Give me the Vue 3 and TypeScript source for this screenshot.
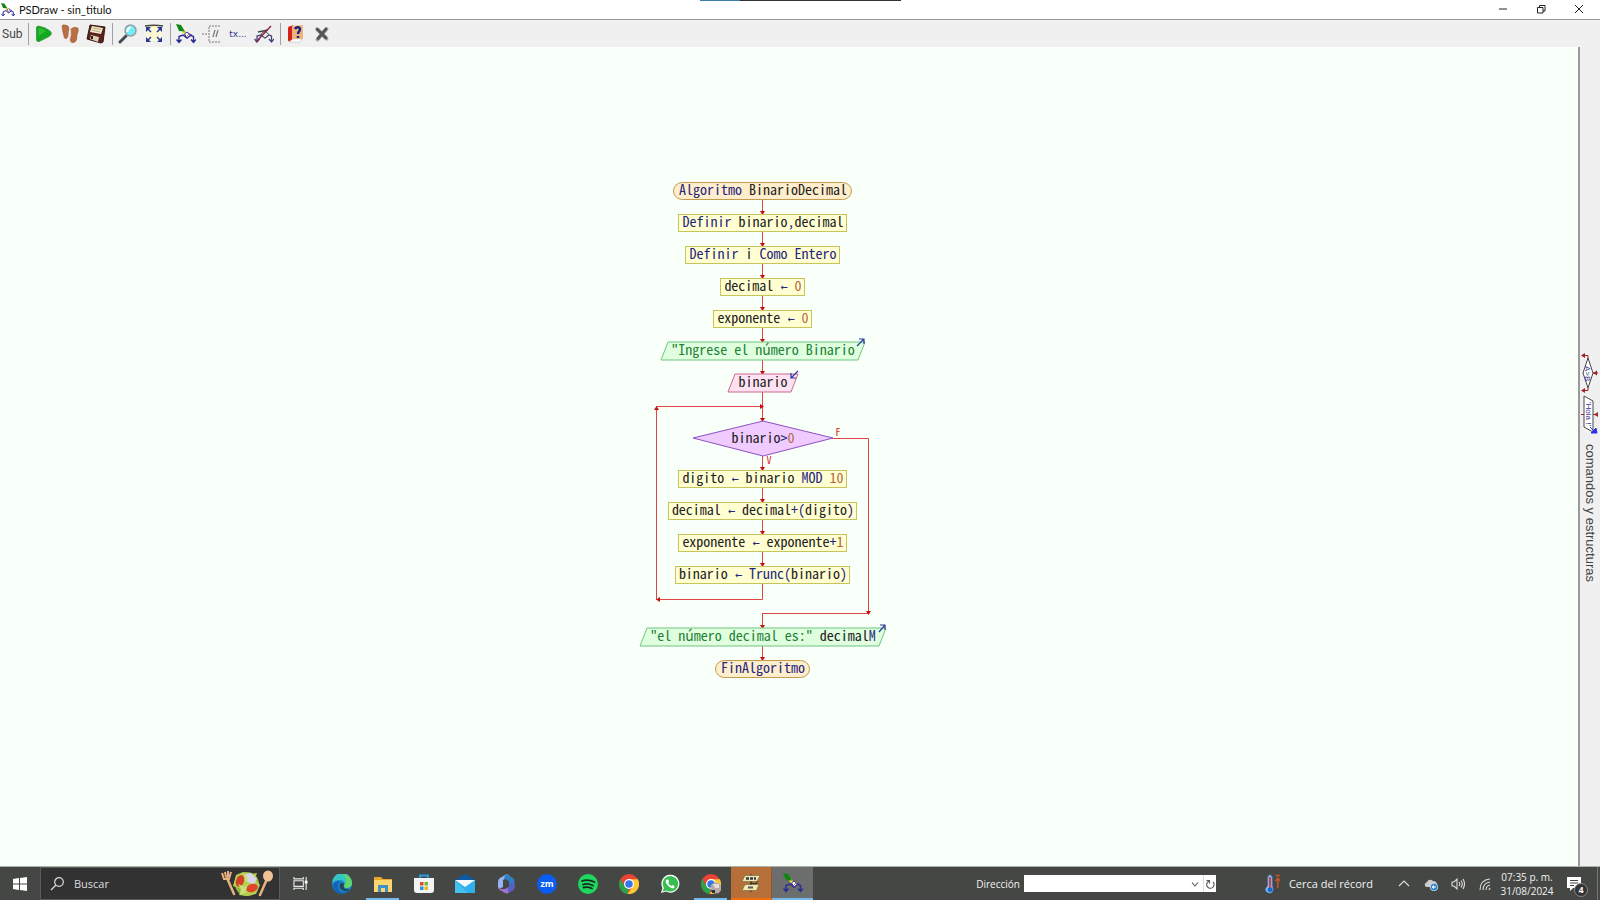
<script setup lang="ts">
type Tone = 'key' | 'name' | 'num' | 'str' | 'arrow'
type Shape = 'pill' | 'box' | 'out' | 'in' | 'diamond'
interface Part { t: string; c: Tone }
interface FlowNode { shape: Shape; y: number; half: number; parts: Part[] }

const CX = 763

const p = (t: string, c: Tone = 'name'): Part => ({ t, c })
const arrow = p('←', 'arrow')

const nodes: FlowNode[] = [
  { shape: 'pill', y: 182, half: 89, parts: [p('Algoritmo ', 'key'), p('BinarioDecimal')] },
  { shape: 'box', y: 214, half: 84, parts: [p('Definir ', 'key'), p('binario'), p(',', 'key'), p('decimal')] },
  { shape: 'box', y: 246, half: 77, parts: [p('Definir ', 'key'), p('i '), p('Como Entero', 'key')] },
  { shape: 'box', y: 278, half: 42, parts: [p('decimal '), arrow, p(' 0', 'num')] },
  { shape: 'box', y: 310, half: 49, parts: [p('exponente '), arrow, p(' 0', 'num')] },
  { shape: 'out', y: 342, half: 98, parts: [p('"Ingrese el número Binario', 'str')] },
  { shape: 'in', y: 374, half: 31, parts: [p('binario')] },
  { shape: 'diamond', y: 430, half: 70, parts: [p('binario'), p('>', 'key'), p('0', 'num')] },
  { shape: 'box', y: 470, half: 84, parts: [p('digito '), arrow, p(' binario '), p('MOD ', 'key'), p('10', 'num')] },
  { shape: 'box', y: 502, half: 94, parts: [p('decimal '), arrow, p(' decimal'), p('+(', 'key'), p('digito'), p(')', 'key')] },
  { shape: 'box', y: 534, half: 84, parts: [p('exponente '), arrow, p(' exponente'), p('+', 'key'), p('1', 'num')] },
  { shape: 'box', y: 566, half: 87, parts: [p('binario '), arrow, p(' Trunc(', 'key'), p('binario'), p(')', 'key')] },
  { shape: 'out', y: 628, half: 119, parts: [p('"el número decimal es:"', 'str'), p(' decimal'), p('M', 'key')] },
  { shape: 'pill', y: 660, half: 47, parts: [p('FinAlgoritmo', 'key')] },
]

// Vertical connectors that end in an arrow head: start and end.
const drops: [number, number][] = [
  [200, 214], [232, 246], [264, 278], [296, 310], [328, 342], [360, 374], [392, 421],
  [456, 470], [488, 502], [520, 534], [552, 566], [613, 628], [646, 660],
]

function outline(n: FlowNode): string {
  const l = CX - n.half
  const r = CX + n.half
  const t = n.y
  const b = n.y + 18
  if (n.shape === 'diamond') return `${l},438 ${CX},421 ${r},438 ${CX},456`
  if (n.shape === 'out' || n.shape === 'in') return `${l + 3},${t} ${r + 4},${t} ${r - 3},${b} ${l - 4},${b}`
  return ''
}
</script>

<template>
  <div class="window">
    <!-- icons used more than once -->
    <svg class="defs" aria-hidden="true">
      <symbol id="flow" viewBox="0 0 20 20">
        <path d="M9 9 15 11 11 14 7 11 3 12.500 3 18M14 11 17.500 12.500 17.500 18M.5 15.500 3 18.500 5.500 15.500M15 15.500 17.500 18.500 20 15.500" fill="none" stroke="#292c94" stroke-width="1.400" />
        <path d="M7 7 11 11" stroke="#e8df3c" stroke-width="3" />
        <path d="M8.500 10 11 8 14.500 11 11 14Z" fill="#fff" stroke="#292c94" />
        <path d="M0 0 5 1 9 7.500 3 7Z" fill="#118512" />
        <path d="M10 13 14 9" stroke="#d06058" />
      </symbol>
      <symbol id="chrome" viewBox="0 0 20 20">
        <circle cx="10" cy="10" r="10" fill="#e94436" />
        <path d="M1.4 5 6 13 10 14.5 8.5 20A10 10 0 0 1 1.4 5Z" fill="#2ba24c" />
        <path d="M10 5.3H18.8A10 10 0 0 1 8.5 19.9L14 12Z" fill="#fcc934" />
        <circle cx="10" cy="10" r="5" fill="#fff" />
        <circle cx="10" cy="10" r="3.8" fill="#3577e8" />
      </symbol>
    </svg>

    <header class="titlebar">
      <svg class="app-icon" viewBox="0 0 20 20"><use href="#flow" /></svg>
      <h1>PSDraw - sin_titulo</h1>
      <span class="snap"></span>
      <div class="caption">
        <button aria-label="Minimizar"><svg viewBox="0 0 10 10"><path d="M1 5H9" /></svg></button>
        <button aria-label="Restaurar"><svg viewBox="0 0 10 10"><path d="M1.5 3.5H7V9H1.500ZM3.500 3.500V1.500H9V7H7" /></svg></button>
        <button aria-label="Cerrar"><svg viewBox="0 0 10 10"><path d="M1 1 9 9M9 1 1 9" /></svg></button>
      </div>
    </header>

    <nav class="toolbar">
      <button class="sub">Sub</button>
      <i class="sep"></i>
      <button aria-label="Ejecutar">
        <svg viewBox="0 0 20 20"><path d="M4 2Q2 2 2.500 6V14Q2 18 5 17.500L15 12.500Q19 10 16 7Q11 3 4 2Z" fill="#13a81e" stroke="#3e9d45" /><path d="M4 4Q8 4 12 7L5 12Z" fill="#2fbd35" /></svg>
      </button>
      <button aria-label="Paso a paso">
        <svg viewBox="0 0 20 20"><path d="M2 3Q2 0 5 1Q9 1 9 5Q8 8 8 12Q7 16 4.500 14Q3 10 2 3ZM11 5Q14 2 18 4Q19 7 17 11Q17 17 15 18Q11 20 10 16Q12 12 11 5Z" fill="#b96f43" stroke="#a45f38" stroke-width=".6" /></svg>
      </button>
      <button aria-label="Guardar">
        <svg viewBox="0 0 20 20"><path d="M4 1 19 3 17 18 15 19 1 15Z" fill="#5c201b" stroke="#351814" /><path d="M6 2 17 4 15 10 4 8Z" fill="#efe7c5" /><path d="M7 4 15 5.500M6 6 14 8" stroke="#a19879" stroke-width=".8" /><path d="M5 11 13 13 12 18 4 15Z" fill="#d9d0ba" /><path d="M6 12V15" stroke="#351814" stroke-width="2" /></svg>
      </button>
      <i class="sep"></i>
      <button aria-label="Zoom">
        <svg viewBox="0 0 20 20"><path d="M2 18 8 12" stroke="#414a55" stroke-width="3" stroke-linecap="round" /><circle cx="12.500" cy="6.500" r="5.500" fill="#70eff8" stroke="#97a0a4" stroke-width="1.500" /><path d="M9.500 8Q9 4 13 3.500" fill="none" stroke="#fff" stroke-width="2" /></svg>
      </button>
      <button aria-label="Ajustar">
        <svg viewBox="0 0 20 20"><path d="M2 2H18L17 17H3Z" fill="#fdfad3" /><path d="M1 2Q10 .5 19 2" fill="none" stroke="#474a3b" stroke-width="1.500" /><path d="M3 4 7 8M17 4 13 8M3 17 7 13M17 17 13 13" stroke="#26379c" stroke-width="1.500" /><path d="M2 3H7L2 8ZM18 3H13L18 8ZM2 18V13L7 18ZM18 18V13L13 18Z" fill="#26379c" /></svg>
      </button>
      <i class="sep"></i>
      <button aria-label="Diagrama"><svg viewBox="0 0 20 20"><use href="#flow" /></svg></button>
      <button aria-label="Comentarios">
        <svg viewBox="0 0 20 20"><path d="M0 10H6M18 2H7V18H18" fill="none" stroke="#777" stroke-dasharray="2 1" /><path d="M11 13 13 6M14 13 16 6" stroke="#777" stroke-width="1.200" /></svg>
      </button>
      <button class="tx">tx...</button>
      <button aria-label="Sin diagrama">
        <svg viewBox="0 0 20 20"><path d="M3 17V12L7 11 11 14 15 11 17.500 12V17M.5 15 3 18 5.500 15M15 15 17.500 18 20 15" fill="none" stroke="#3f4580" stroke-width="1.300" /><path d="M8 9 11 7 15 10.500 11 14 7 11Z" fill="#e8e8ea" stroke="#4c4f57" /><path d="M4 8 14 6" stroke="#444" stroke-width="1.500" /><path d="M2 18 17 2" stroke="#8a2745" stroke-width="1.500" /></svg>
      </button>
      <i class="sep"></i>
      <button aria-label="Ayuda">
        <svg viewBox="0 0 20 20"><path d="M3 3 7 1V15L3 18Z" fill="#d5201b" /><path d="M3 18 7 15H16L14 18Z" fill="#fff" stroke="#bbb" stroke-width=".5" /><path d="M5 2 17 1V15H6Z" fill="#eeb37d" /><path d="M2 4Q2 2 6 2V15Q3 15 2 18Z" fill="#d5201b" /><path d="M9 5Q10 3 12 3.200Q15 4 13.500 7Q12 8 12 10M12 12V14" fill="none" stroke="#171f80" stroke-width="2.400" /></svg>
      </button>
      <button aria-label="Cerrar diagrama">
        <svg viewBox="0 0 20 20"><path d="M5.500 5.500 14.500 14.500M14.500 5 5.500 15.500" stroke="#aaa" stroke-width="4" stroke-linecap="round" /><path d="M5 5 14 14M14 5 6 14.500" stroke="#555" stroke-width="2.800" stroke-linecap="round" /></svg>
      </button>
    </nav>

    <main class="work">
      <section class="canvas">
        <svg class="diagram" viewBox="630 170 270 520" role="img" aria-label="BinarioDecimal">
          <g class="wire">
            <path v-for="[a, b] in drops" :key="a" :d="`M${CX - 0.5} ${a}V${b}`" />
            <path d="M762.500 584V599.500H656.500V406.500H762.500" />
            <path d="M832 438.500H868.500V613.500H762.500" />
          </g>
          <g class="head">
            <path v-for="[a, b] in drops" :key="a" :d="`M${CX - 3} ${b - 3}h5l-2.500 4z`" />
            <path d="M760 404v5l4 -2.500zM660 597v5l-4 -2.500zM654 410h5l-2.500 -4zM866 611h5l-2.500 4z" />
          </g>
          <g v-for="n in nodes" :key="n.y" :class="['node', n.shape]">
            <rect v-if="n.shape === 'box' || n.shape === 'pill'" :x="CX - n.half - 0.5" :y="n.y + 0.5" :width="n.half * 2" height="17" :rx="n.shape === 'pill' ? 9 : 0" />
            <polygon v-else :points="outline(n)" />
            <text :x="CX" :y="n.y + 13"><tspan v-for="(q, i) in n.parts" :key="i" :class="q.c">{{ q.t }}</tspan></text>
          </g>
          <g class="io">
            <path d="M857 346 864 339M859 339H864V344" />
            <path d="M879 632 885 625M880 625H885V630" />
            <path d="M798 371 791 378M791 373V378H796" />
          </g>
          <text class="branch" x="838" y="436">F</text>
          <text class="branch" x="769" y="464">V</text>
        </svg>
      </section>

      <aside class="palette">
        <svg class="pieces" viewBox="0 0 20 80">
          <path d="M8 4 13 19 8 34 3 19ZM4 42 13 47V78L4 73Z" fill="#fff" stroke="#333" stroke-width=".9" />
          <path d="M8 4V1.500H2M8 34V36.500H2M13 19H18M13 60.500H18M4 60.500H1" fill="none" stroke="#a12227" />
          <path d="M1 1.500 5 -1V4ZM1 36.500 5 34V39ZM13 19 17 16.500V21.500ZM14 60.500 18 58V63Z" fill="#a12227" />
          <path d="M10 73 16 79M17 79 11 79 16 74Z" fill="#2931e8" stroke="#2931e8" />
          <text x="12" y="-5" transform="rotate(90)">A&gt;B</text>
          <text x="48" y="-6" transform="rotate(90)">'Hola !'</text>
        </svg>
        <span class="palette-name">comandos y estructuras</span>
      </aside>
    </main>

    <footer class="taskbar">
      <button class="start" aria-label="Inicio">
        <svg viewBox="0 0 14 14"><path d="M0 2 6 1V6.500H0ZM7 1 14 0V6.500H7ZM0 7.500H6V13L0 12ZM7 7.500H14V14L7 13Z" fill="#fff" /></svg>
      </button>
      <label class="search">
        <svg class="lens" viewBox="0 0 14 14"><circle cx="9" cy="5" r="4.300" /><path d="M6 8 1 13" /></svg>
        <input type="text" placeholder="Buscar" aria-label="Buscar">
        <svg class="salad" viewBox="0 0 52 28">
          <circle cx="26" cy="14" r="12" fill="#91b53f" />
          <path d="M15 5 22 2 29 4 36 3 34 9 39 15 35 24 26 26 18 25 20 19 12 16Z" fill="#b4cf4f" />
          <path d="M24 4 30 3 36 9 33 14 26 12Z" fill="#d9d4e8" />
          <ellipse cx="19" cy="11" rx="4" ry="6" fill="#d33e24" transform="rotate(20 19 11)" />
          <ellipse cx="31" cy="18" rx="6" ry="4" fill="#dc452a" transform="rotate(-20 31 18)" />
          <path d="M17 14 24 17 27 14 24 23 19 25 20 19ZM23 2 27 9 24 12Z" fill="#c9df7c" />
          <path d="M6 8 13 24M46 9 39 25" stroke="#e7b27f" stroke-width="2.500" stroke-linecap="round" />
          <path d="M1 3 3 9 8 9 10 2M4 2 5 7M7 1V7" fill="none" stroke="#e7b27f" stroke-width="2" />
          <ellipse cx="47" cy="6" rx="5" ry="5.500" fill="#f0c293" />
        </svg>
      </label>
      <button class="app" aria-label="Vista de tareas">
        <svg class="small" viewBox="0 0 16 16"><path d="M1 1V3H11V1M1 15V13H11V15M1 5H11V11H1ZM14 1V15" fill="none" stroke="#e8e8e8" stroke-width="1.200" /><path d="M12.500 5H15.500V8H12.500Z" fill="#fff" /></svg>
      </button>
      <button class="app" aria-label="Edge">
        <svg viewBox="0 0 20 20"><circle cx="10" cy="10" r="10" fill="#1687d2" /><path d="M0 9A10 10 0 0 1 20 9Q20 14 14 14Q11 13 13 10Q12 6 8 6Q3 6 0 9Z" fill="#35c3c5" /><path d="M11 0Q20 1 20 10Q19 14 14 14Q11 13 13 10Q16 5 11 0Z" fill="#63d66a" /><path d="M8 7Q4 12 8 17Q12 20 18 16Q14 20 9 20Q1 18 1 11Q3 7 8 7Z" fill="#1563b4" /><path d="M8 10Q6 15 12 17Q16 18 18 15Q14 16 12 14Q11 12 12 10Q10 7 8 10Z" fill="#254754" /></svg>
      </button>
      <button class="app open" aria-label="Explorador de archivos">
        <svg viewBox="0 0 20 20"><path d="M1 3H8L10 5H19V17H1Z" fill="#e8a72a" /><path d="M1 6H19V18H1Z" fill="#fcd66c" /><path d="M5 18V11H15V18H12V14H8V18Z" fill="#3f91c9" /></svg>
      </button>
      <button class="app" aria-label="Store">
        <svg viewBox="0 0 20 20"><path d="M6 5V1.500H14V5" fill="none" stroke="#2a9de0" stroke-width="1.800" /><path d="M0 4H20V16Q20 19 17 19H3Q0 19 0 16Z" fill="#f2f3f4" /><path d="M6 8H9.500V11.500H6Z" fill="#e34b27" /><path d="M10.500 8H14V11.500H10.500Z" fill="#76b633" /><path d="M6 12.500H9.500V16H6Z" fill="#2494d9" /><path d="M10.500 12.500H14V16H10.500Z" fill="#efb71c" /></svg>
      </button>
      <button class="app" aria-label="Correo">
        <svg viewBox="0 0 20 20"><path d="M0 6 10 0 20 6V10H0Z" fill="#0c59a4" /><path d="M0 6H20V19H0Z" fill="#2eb1ea" /><path d="M0 6H20L10 13Z" fill="#f4f8fb" /><path d="M0 7 13 19H0Z" fill="#45c3f0" /></svg>
      </button>
      <button class="app" aria-label="Microsoft 365">
        <svg viewBox="0 0 20 20"><path d="M11 0 4 4Q2 5 2 8V13Q2 15 5 14L7 13V6L14 2Z" fill="#94b4f4" /><path d="M11 0 17 4Q18.500 5 18.500 8V13L13 10V7L8 4.500Q8 2 11 0Z" fill="#2f7fc4" /><path d="M2 12Q2 15 4 16L9 19Q11 20 13 18.500L17 16Q18.500 15 18.500 12L13 10.500V13L9 15Q4 16 2 12Z" fill="#a174d8" /><path d="M18.500 8V13Q18 15 17 16L13 18.500Q11 16 12 14L13 13V10Z" fill="#5360c8" /></svg>
      </button>
      <button class="app" aria-label="Zoom">
        <svg viewBox="0 0 20 20"><circle cx="10" cy="10" r="10" fill="#0b5cf0" /><text class="zm" x="10" y="13">zm</text></svg>
      </button>
      <button class="app" aria-label="Spotify">
        <svg viewBox="0 0 20 20"><circle cx="10" cy="10" r="10" fill="#1ed760" /><path d="M4 7Q10 5 16.500 8M5 10.500Q10 9 15 11.500M5.500 13.500Q10 12.500 14 14.500" fill="none" stroke="#142b1c" stroke-width="1.800" stroke-linecap="round" /></svg>
      </button>
      <button class="app" aria-label="Chrome"><svg viewBox="0 0 20 20"><use href="#chrome" /></svg></button>
      <button class="app" aria-label="WhatsApp">
        <svg viewBox="0 0 20 20"><path d="M1 19 2.500 14A9 9 0 1 1 6 17.500Z" fill="#fff" /><path d="M2.500 17.500 4 14A7.700 7.700 0 1 1 6.500 16.400Z" fill="#35bd50" /><path d="M7 5.500Q5 6.500 6 9Q8 13 12 14.500Q15 14 14.500 12L12.500 11 11.500 12Q9 11 8.300 8.700L9 7.500 8.300 5.500Z" fill="#fff" /></svg>
      </button>
      <button class="app open" aria-label="Chrome, perfil">
        <svg viewBox="0 0 20 20"><use href="#chrome" /><circle cx="15" cy="14" r="5.500" fill="#b9aaa5" /><path d="M10 16H14V19H11Z" fill="#27334b" /><path d="M12 10H18V14H14Z" fill="#e4dedb" /></svg>
      </button>
      <button class="app pseint" aria-label="PSeInt">
        <svg viewBox="0 0 20 20"><path d="M10 1V19" stroke="#2a2928" /><path d="M4 2.500H19L16 8.500H1ZM4 11.500H18L15.500 17.500H1Z" fill="#f1e9ac" stroke="#75704c" stroke-width=".7" /><path d="M5 5.500H15" stroke="#37364b" stroke-width="2.500" stroke-dasharray="3 1" /><path d="M7 14.500H12" stroke="#55546b" stroke-width="2" /><path d="M10 8.500V12M10 10.500H16V8" stroke="#3c3830" fill="none" /></svg>
      </button>
      <button class="app current" aria-label="PSDraw"><svg viewBox="0 0 20 20"><use href="#flow" /></svg></button>

      <div class="right">
        <label class="address-label" for="address">Dirección</label>
        <div class="address">
          <input id="address" type="text">
          <button aria-label="Desplegar"><svg viewBox="0 0 10 10"><path d="M2 3.500 5 7 8 3.500" /></svg></button>
          <button class="reload" aria-label="Actualizar"><svg viewBox="0 0 10 10"><path d="M1.500 1.500H4.500V4.500M4.500 2A3.700 3.700 0 1 0 8 3" /></svg></button>
        </div>
        <button class="weather">
          <svg viewBox="0 0 16 20"><path d="M3 3Q5-1 7 3V12Q9 15 7 18Q5 20 2 18Q-1 15 3 12Z" fill="#9bcff5" stroke="#4e9ee4" /><circle cx="5" cy="15.500" r="2.500" fill="#1a66cf" /><path d="M5 3V14" stroke="#dd3849" stroke-width="2" /><path d="M10.500 1.500H15M12.800 14V5M10.500 7 12.800 4 15 7" fill="none" stroke="#c8532a" stroke-width="1.500" /></svg>
          <span>Cerca del récord</span>
        </button>
        <button class="tray" aria-label="Iconos ocultos"><svg viewBox="0 0 14 14"><path d="M2 9 7 4 12 9" /></svg></button>
        <button class="tray" aria-label="OneDrive"><svg viewBox="0 0 14 14"><path d="M2 10Q-1 7 3 5Q5 1 9 4Q13 4 13 8V10Z" fill="#ccc" stroke="none" /><circle cx="10" cy="10" r="3.800" fill="#2779cc" stroke="#dceaf7" stroke-width=".8" /><path d="M8 10H12M10 8.500 8.500 10 10 11.500" stroke="#fff" /></svg></button>
        <button class="tray" aria-label="Volumen"><svg viewBox="0 0 14 14"><path d="M1 5H3L6 2V12L3 9H1ZM8 5Q9.500 7 8 9M10 3.500Q12.500 7 10 10.500M12 2Q15 7 12 12" /></svg></button>
        <button class="tray" aria-label="Red"><svg viewBox="0 0 14 14"><path d="M2 13Q2 3 12 2M5 13Q5 6 12 5M8 13Q8 9 12 8M11 13Q11 11.500 12.500 11" /></svg></button>
        <button class="clock"><time>07:35 p. m.</time><time>31/08/2024</time></button>
        <button class="notes" aria-label="Notificaciones, 4">
          <svg viewBox="0 0 14 14"><path d="M0 0H14V11H6L3 14V11H0Z" fill="#fff" /><path d="M3 3.500H11M3 6H11M3 8.500H7" stroke="#444643" /></svg>
          <b class="badge">4</b>
        </button>
        <i class="desktop"></i>
      </div>
    </footer>
  </div>
</template>

<style>
html, body { margin: 0; }
</style>

<style scoped>
.window {
  display: flex;
  flex-direction: column;
  height: 100vh;
  overflow: hidden;
  background: #f0f0f0;
  font-family: "Open Sans", "Noto Sans", sans-serif;
  font-size: 11px;
  color: #111;
}
.defs { position: absolute; width: 0; height: 0; }
button {
  display: flex;
  align-items: center;
  justify-content: center;
  padding: 0;
  border: 0;
  background: none;
  color: inherit;
  font: inherit;
}
input { min-width: 0; padding: 0; border: 0; outline: 0; background: none; font: inherit; }

.titlebar {
  position: relative;
  flex: none;
  display: flex;
  align-items: center;
  height: 19px;
  background: #fff;
  border-bottom: 1px solid #999;
}
.app-icon { width: 14px; height: 14px; margin: 0 4px 0 1px; }
.titlebar h1 { margin: 0; font: 11px "Lato", sans-serif; line-height: 18px; }
.snap {
  position: absolute;
  top: 0;
  left: 700px;
  width: 201px;
  height: 1px;
  background: linear-gradient(to right, #3a7ca8 40px, #333 40px);
}
.caption { display: flex; margin: 0 2px 2px auto; }
.caption button { width: 38px; height: 16px; }
.caption svg { width: 10px; height: 10px; fill: none; stroke: #222; stroke-width: 1; }

.toolbar { flex: none; display: flex; align-items: center; height: 27px; }
.toolbar button { width: 26px; height: 26px; }
.toolbar button svg { width: 20px; height: 20px; }
.toolbar .sub { width: 25px; justify-content: flex-start; padding-left: 2px; font: 12px "Roboto", sans-serif; color: #444; }
.toolbar .tx { font: 9px "DejaVu Sans", sans-serif; color: #34349a; }
.sep { width: 1px; height: 22px; margin: 0 2px 0 3px; background: #a0a0a0; }

.work { flex: 1; display: flex; min-height: 0; }
.canvas { position: relative; flex: 1; background: #f9fff9; border-right: 2px solid #9a9a9a; }
.diagram { position: absolute; left: 630px; top: 123px; width: 270px; height: 520px; }
.wire path { fill: none; stroke: #df4545; stroke-width: 1; }
.head path { fill: #c80d14; }
.node text {
  font: 14px "Noto Sans Mono CJK JP", "Liberation Mono", monospace;
  text-anchor: middle;
  white-space: pre;
}
.node rect, .node polygon { stroke-width: 1; }
.box rect { fill: #ffffd2; stroke: #c8c45c; }
.pill rect { fill: #ffeecb; stroke: #c79b4d; }
.out polygon { fill: #dfffdf; stroke: #6fc481; }
.in polygon { fill: #ffe2f2; stroke: #c9698e; }
.diamond polygon { fill: #efcbff; stroke: #8e50c5; }
.key { fill: #26267d; }
.name { fill: #222; }
.num { fill: #b4683f; }
.str { fill: #238035; }
.arrow { fill: #26267d; font: 12px "DejaVu Sans Mono", monospace; }
.io path { fill: none; stroke: #2a3a9c; stroke-width: 1.2px; }
.branch { font: 10px "Noto Sans Mono CJK JP", "Liberation Mono", monospace; text-anchor: middle; fill: #d22; }

.palette {
  width: 20px;
  display: flex;
  flex-direction: column;
  align-items: center;
  justify-content: center;
  gap: 10px;
  padding-top: 24px;
  box-sizing: border-box;
}
.pieces { flex: none; width: 20px; height: 80px; overflow: visible; }
.pieces text { font: 8px "Liberation Sans", sans-serif; fill: #34349a; }
.palette-name {
  writing-mode: vertical-rl;
  font: 13px "Liberation Sans", sans-serif;
  line-height: 18px;
  color: #444;
  white-space: nowrap;
}

.taskbar {
  flex: none;
  display: flex;
  height: 33px;
  background: #454744;
  border-top: 1px solid #a9b0a9;
  color: #f2f2f2;
}
.start { width: 40px; }
.start svg { width: 14px; height: 14px; }
.search {
  display: flex;
  align-items: center;
  box-sizing: border-box;
  width: 240px;
  padding: 0 6px 0 9px;
  background: #323232;
  border: 1px solid #5b5d5a;
}
.search input { flex: 1; margin-left: 10px; font-size: 11px; color: #ddd; }
.search input::placeholder { color: #ddd; opacity: 1; }
.lens { width: 14px; height: 14px; fill: none; stroke: #ddd; stroke-width: 1.2px; }
.salad { width: 52px; height: 28px; }
.app { width: 41px; }
.app svg { width: 20px; height: 20px; }
.app .small { width: 15px; height: 15px; }
.open { background: linear-gradient(#76b9ed, #76b9ed) center bottom / 33px 2px no-repeat; }
.pseint { background: #b76f39; border-bottom: 2px solid #f56d0c; border-right: 1px solid #8d5730; }
.current { background: #6b6e6c; border-bottom: 2px solid #76b9ed; }
.zm { font: 700 9px "Open Sans", sans-serif; fill: #fff; text-anchor: middle; }

.right { display: flex; align-items: center; margin-left: auto; }
.right > button { height: 33px; }
.address-label { margin-right: 4px; font-size: 10px; }
.address { display: flex; width: 192px; height: 17px; background: #fff; }
.address input { flex: 1; color: #222; }
.address button { width: 16px; }
.address .reload { width: 13px; border-left: 1px solid #ddd; }
.address svg { width: 10px; height: 10px; fill: none; stroke: #555; stroke-width: 1.1px; }
.weather { gap: 8px; width: 110px; margin: 0 16px 0 48px; white-space: nowrap; }
.weather svg { width: 16px; height: 20px; flex: none; }
.tray { width: 27px; }
.tray svg { width: 14px; height: 14px; fill: none; stroke: #ddd; stroke-width: 1.1px; }
.clock { flex-direction: column; width: 58px; font-size: 10px; line-height: 14px; white-space: nowrap; }
.notes { position: relative; width: 41px; padding-right: 5px; }
.notes svg { width: 14px; height: 14px; }
.badge {
  position: absolute;
  left: 18px;
  top: 16px;
  width: 12px;
  height: 12px;
  border: 1px solid #888;
  border-radius: 50%;
  background: #333;
  font-size: 9px;
  line-height: 12px;
  text-align: center;
}
.desktop { width: 3px; height: 33px; border-left: 1px solid #777; box-sizing: border-box; }
</style>
